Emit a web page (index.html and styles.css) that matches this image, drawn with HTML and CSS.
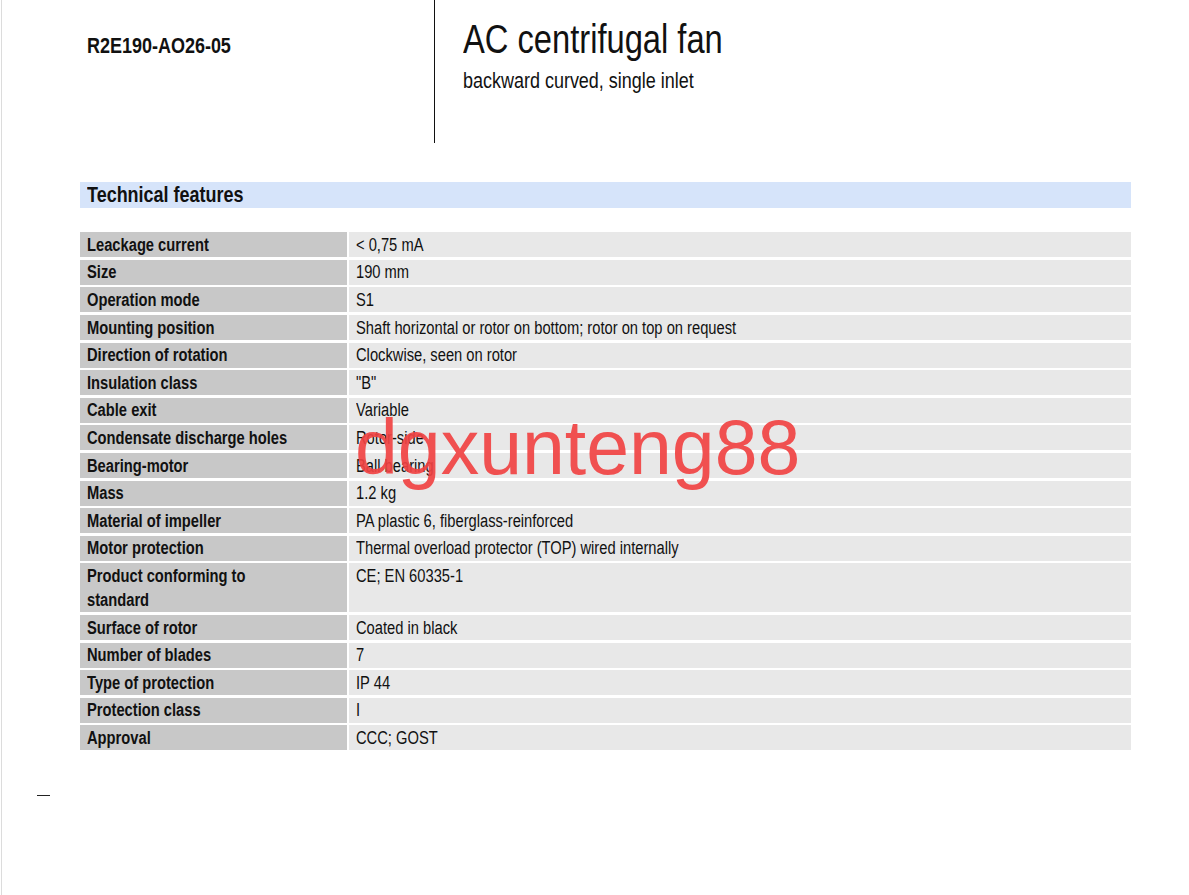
FILE: index.html
```html
<!DOCTYPE html>
<html lang="en">
<head>
<meta charset="utf-8">
<title>R2E190-AO26-05 AC centrifugal fan</title>
<link rel="stylesheet" href="styles.css">
</head>
<body>
<div class="page">
  <header class="top">
    <div class="top-left">
      <div class="model"><span class="t">R2E190-AO26-05</span></div>
    </div>
    <div class="top-right">
      <h1 class="title"><span class="t">AC centrifugal fan</span></h1>
      <div class="subtitle"><span class="t">backward curved, single inlet</span></div>
    </div>
  </header>

  <section class="features">
    <h2 class="section-head"><span class="t">Technical features</span></h2>
    <div class="spec">
      <div class="k"><span class="t">Leackage current</span></div><div class="v"><span class="t">&lt; 0,75 mA</span></div>
      <div class="k"><span class="t">Size</span></div><div class="v"><span class="t">190 mm</span></div>
      <div class="k"><span class="t">Operation mode</span></div><div class="v"><span class="t">S1</span></div>
      <div class="k"><span class="t">Mounting position</span></div><div class="v"><span class="t">Shaft horizontal or rotor on bottom; rotor on top on request</span></div>
      <div class="k"><span class="t">Direction of rotation</span></div><div class="v"><span class="t">Clockwise, seen on rotor</span></div>
      <div class="k"><span class="t">Insulation class</span></div><div class="v"><span class="t">"B"</span></div>
      <div class="k"><span class="t">Cable exit</span></div><div class="v"><span class="t">Variable</span></div>
      <div class="k"><span class="t">Condensate discharge holes</span></div><div class="v"><span class="t">Rotor-side</span></div>
      <div class="k"><span class="t">Bearing-motor</span></div><div class="v"><span class="t">Ball bearing</span></div>
      <div class="k"><span class="t">Mass</span></div><div class="v"><span class="t">1.2 kg</span></div>
      <div class="k"><span class="t">Material of impeller</span></div><div class="v"><span class="t">PA plastic 6, fiberglass-reinforced</span></div>
      <div class="k"><span class="t">Motor protection</span></div><div class="v"><span class="t">Thermal overload protector (TOP) wired internally</span></div>
      <div class="k"><span class="t">Product conforming to<br>standard</span></div><div class="v"><span class="t">CE; EN 60335-1</span></div>
      <div class="k"><span class="t">Surface of rotor</span></div><div class="v"><span class="t">Coated in black</span></div>
      <div class="k"><span class="t">Number of blades</span></div><div class="v"><span class="t">7</span></div>
      <div class="k"><span class="t">Type of protection</span></div><div class="v"><span class="t">IP 44</span></div>
      <div class="k"><span class="t">Protection class</span></div><div class="v"><span class="t">I</span></div>
      <div class="k"><span class="t">Approval</span></div><div class="v"><span class="t">CCC; GOST</span></div>
    </div>
  </section>

  <div class="foot-mark"></div>

  <div class="watermark">dgxunteng88</div>
</div>
</body>
</html>
```

FILE: styles.css
```css
html, body {
  margin: 0;
  padding: 0;
  background: #ffffff;
}

body {
  font-family: "Liberation Sans", Arial, sans-serif;
  color: #111111;
}

.page {
  position: relative;
  margin-left: 1px;
  border-left: 1px solid #dcdcdc;
  min-height: 895px;
  box-sizing: border-box;
}

/* emulate the condensed (Arial Narrow-like) face of the original */
.t {
  display: inline-block;
  white-space: nowrap;
  transform: scaleX(0.817);
  transform-origin: 0 50%;
}

.top {
  display: flex;
  height: 143px;
}

.top-left {
  width: 433px;
  border-right: 1px solid #111111;
  padding: 33px 0 0 85px;
  box-sizing: border-box;
}

.model {
  font-size: 22px;
  line-height: 26px;
  font-weight: bold;
}

.top-right {
  padding: 17px 0 0 28px;
}

.title {
  margin: 0;
  font-size: 40px;
  line-height: 44px;
  font-weight: normal;
}

.subtitle {
  margin-top: 7px;
  font-size: 22px;
  line-height: 26px;
}

.features {
  margin: 38.7px 0 0 78px;
  width: 1051px;
}

.section-head {
  margin: 0;
  height: 26.6px;
  line-height: 26.6px;
  padding-left: 7px;
  background: #d6e4fa;
  font-size: 22px;
  font-weight: bold;
}

.spec {
  margin-top: 24px;
  display: grid;
  grid-template-columns: 267px 1fr;
  column-gap: 2px;
  row-gap: 2.6px;
  font-size: 18px;
  line-height: 24px;
}

.k, .v {
  padding: 0.5px 0 0.5px 7px;
  min-height: 24px;
}

.k {
  background: #c8c8c8;
  font-weight: bold;
}

.v {
  background: #e8e8e8;
}

.foot-mark {
  margin: 45px 0 0 35px;
  width: 13px;
  height: 1px;
  background: #222222;
}

.watermark {
  position: absolute;
  left: 353px;
  top: 403px;
  font-family: "Liberation Sans", Arial, sans-serif;
  font-size: 77px;
  line-height: normal;
  color: rgba(240, 66, 66, 0.92);
  pointer-events: none;
}
```
